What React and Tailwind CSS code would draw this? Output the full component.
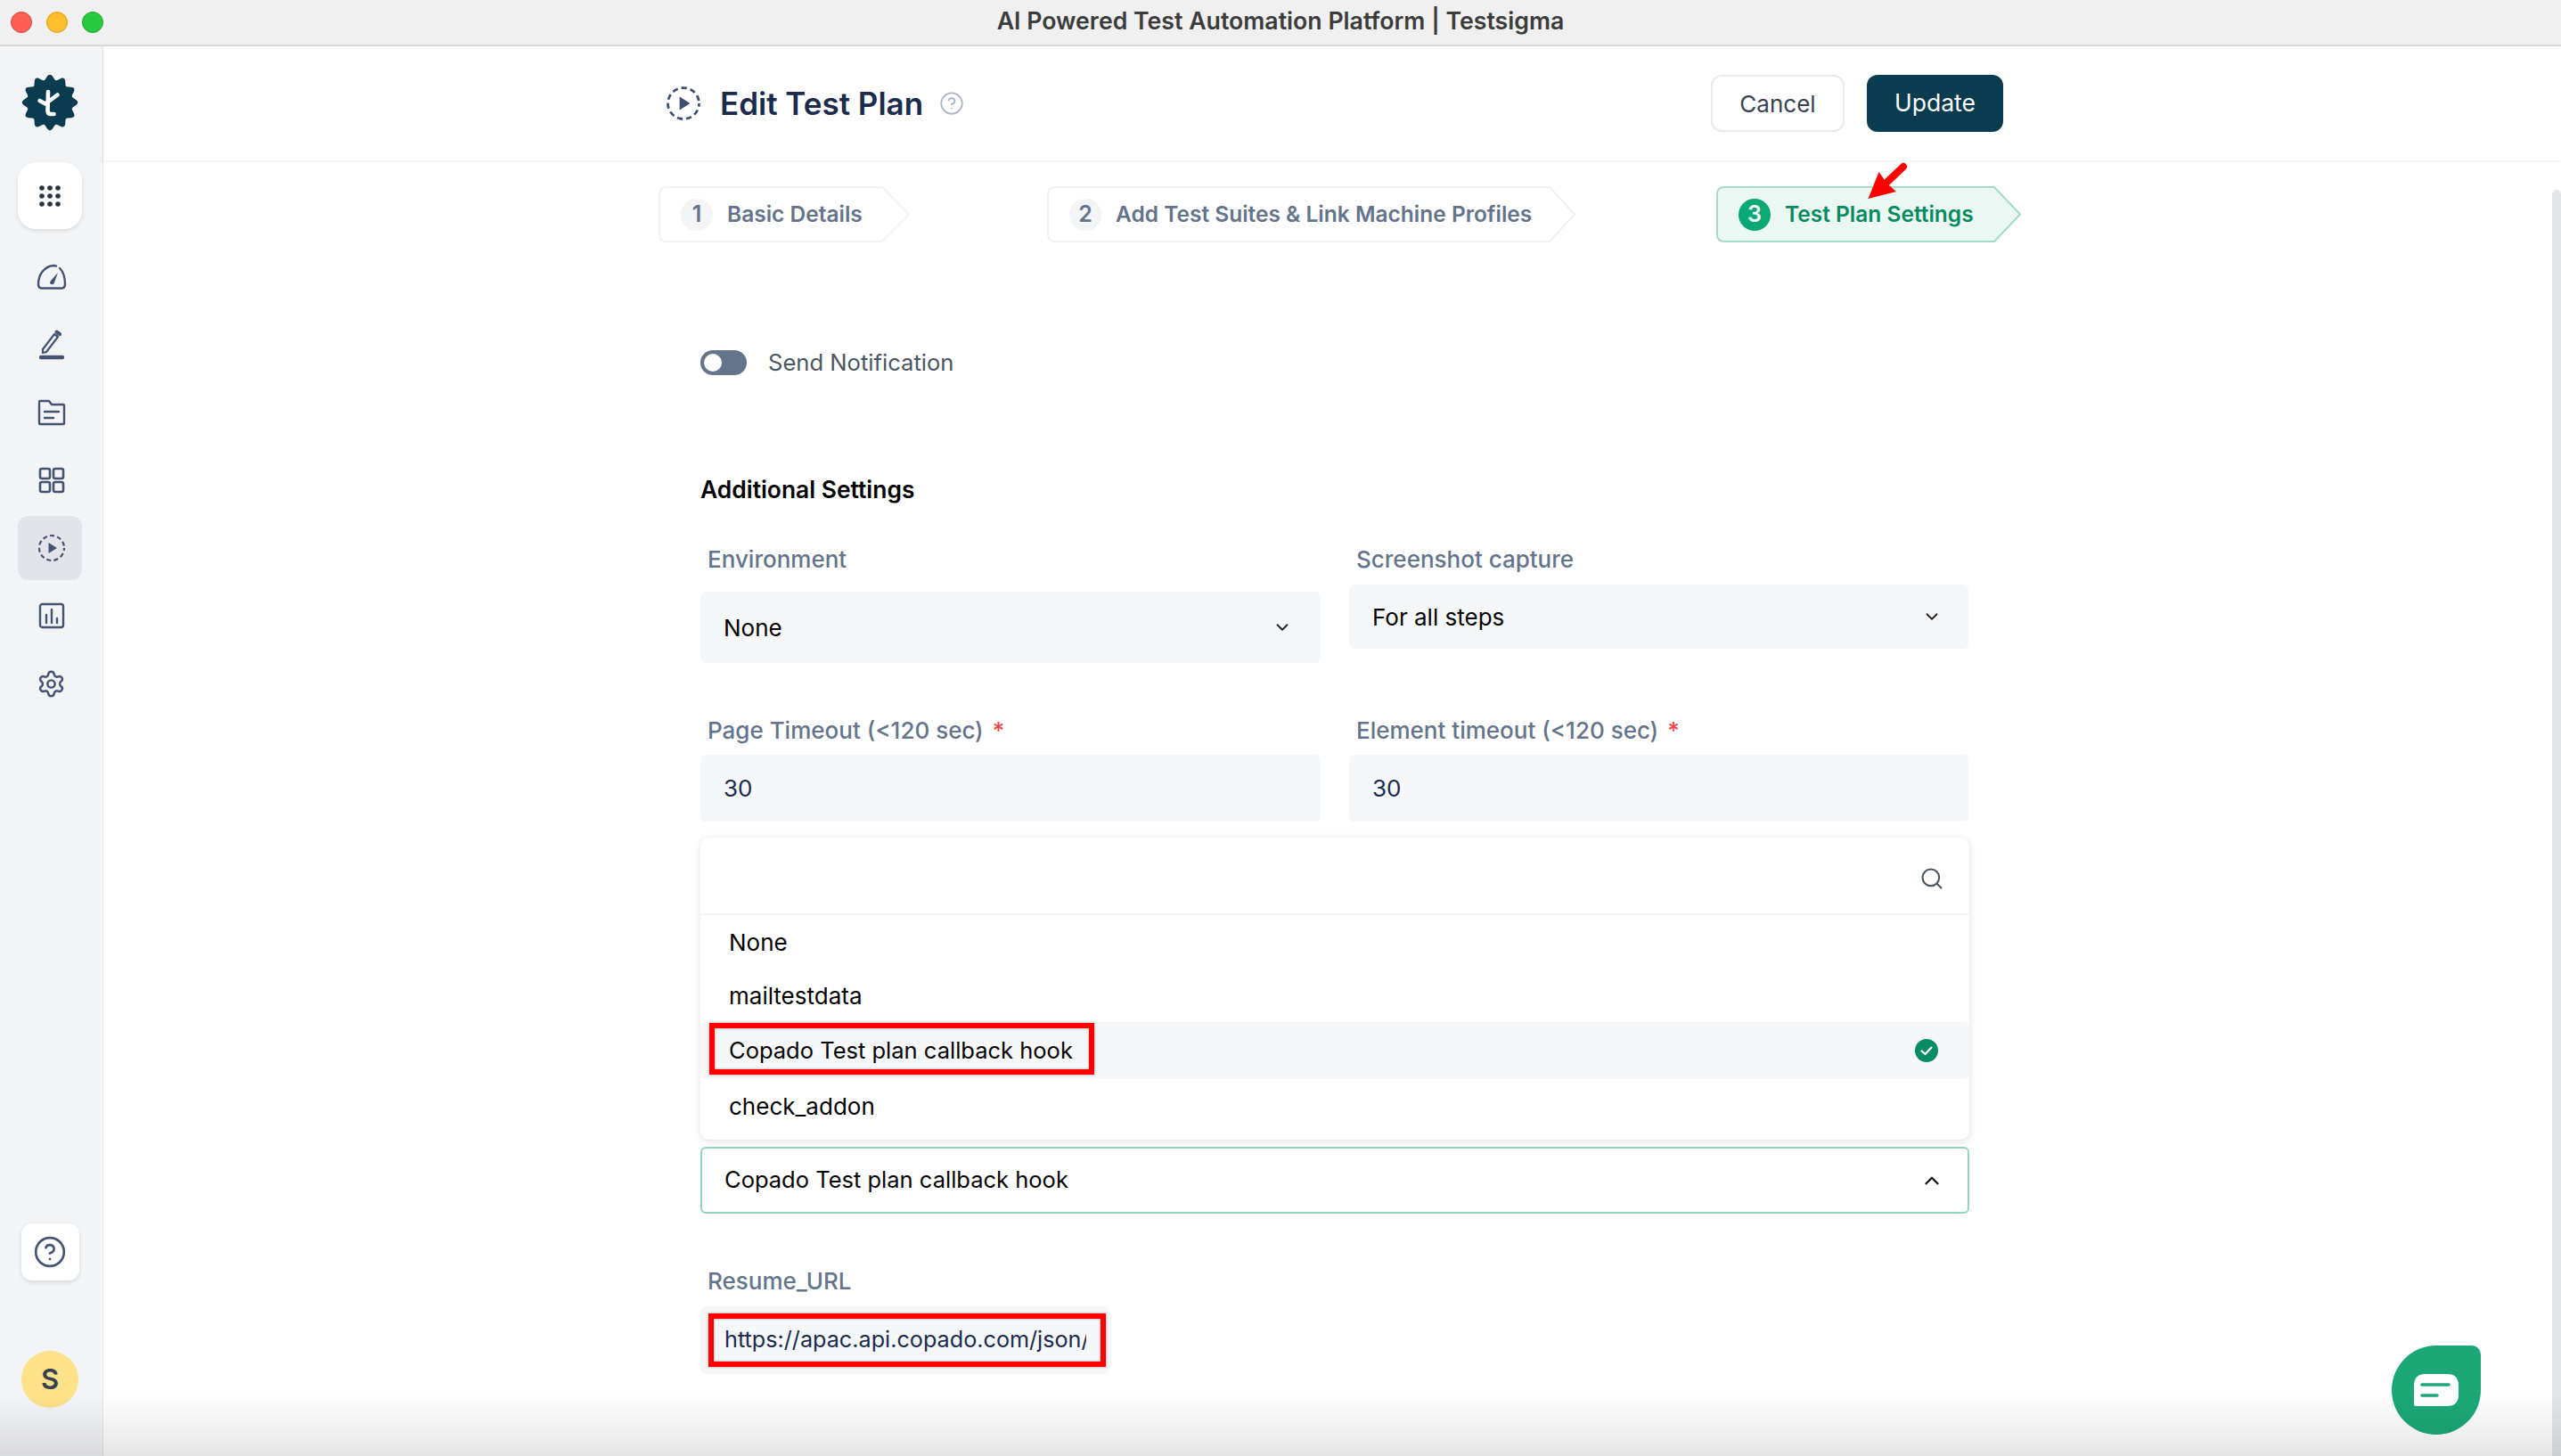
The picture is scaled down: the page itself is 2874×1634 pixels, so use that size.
import React from 'react';
import { ChevronDown, ChevronUp, CircleHelp, Search, Settings } from 'lucide-react';

// 12 lobed badge for the logo
const badgePath = (() => {
  const pts = [];
  for (let i = 0; i < 240; i++) {
    const a = (i / 240) * Math.PI * 2;
    const r = 28.5 + 2.8 * Math.cos(a * 12);
    pts.push(`${(32 + r * Math.sin(a)).toFixed(2)},${(31 - r * Math.cos(a)).toFixed(2)}`);
  }
  return `M${pts.join('L')}Z`;
})();

const Logo = () => (
  <svg viewBox="0 0 64 64" className="w-[64px] h-[64px]">
    <path d={badgePath} fill="#0a3b4f" />
    <path d="M30 19 L29.5 40 Q29.5 44 33 44 L36.5 44" fill="none" stroke="#fff" strokeWidth="4.6" strokeLinecap="round" />
    <path d="M20.5 29 L27 32.5 L40.5 22.5" fill="none" stroke="#fff" strokeWidth="4.6" strokeLinecap="round" strokeLinejoin="round" />
  </svg>
);

const DashedPlay = ({ size = 32, color = '#445373' }) => (
  <svg width={size} height={size} viewBox="0 0 32 32">
    <circle cx="16" cy="16" r="14" fill="none" stroke={color} strokeWidth="2.2" strokeDasharray="5 3.2" strokeDashoffset="2" />
    <path d="M12.5 10 L22 16 L12.5 22 Z" fill={color} />
  </svg>
);

const GaugeIcon = () => (
  <svg width="34" height="30" viewBox="0 0 34 30" fill="none" stroke="#445373" strokeWidth="2.4">
    <path d="M5 27.5 Q2 27 2 23 C2 11 10 2 20 2 L22 2.6 M26 5 C30 9 32 15 32 23 Q32 27 29 27.5 L5 27.5" strokeLinecap="round" />
    <path d="M24 10 L16 19 Q14 22 16.5 23 Q19 24 20 21 Z" fill="#445373" stroke="none" />
  </svg>
);

const PenIcon = () => (
  <svg width="30" height="34" viewBox="0 0 30 34" fill="none" stroke="#445373" strokeWidth="2.2">
    <path d="M5 22 L18 5 L22 8 L9 25 L5 26 Z" strokeLinejoin="round" />
    <path d="M20.5 2.5 L24 5" strokeWidth="4" strokeLinecap="round" />
    <path d="M3 31 L27 31" strokeWidth="4.4" strokeLinecap="round" />
  </svg>
);

const FolderIcon = () => (
  <svg width="32" height="30" viewBox="0 0 32 30" fill="none" stroke="#445373" strokeWidth="2.4">
    <path d="M2 3 Q2 2 3 2 L13 2 L16 6 L29 6 Q30 6 30 7 L30 27 Q30 28 29 28 L3 28 Q2 28 2 27 Z" strokeLinejoin="round" />
    <path d="M8 14 L24 14 M8 21 L18 21" strokeLinecap="round" />
  </svg>
);

const GridIcon = () => (
  <svg width="30" height="30" viewBox="0 0 30 30" fill="none" stroke="#445373" strokeWidth="2.6">
    <rect x="2" y="2" width="11" height="11" rx="2" />
    <rect x="17" y="2" width="11" height="11" rx="2" />
    <rect x="2" y="17" width="11" height="11" rx="2" />
    <rect x="17" y="17" width="11" height="11" rx="2" />
  </svg>
);

const ReportIcon = () => (
  <svg width="30" height="30" viewBox="0 0 30 30" fill="none" stroke="#445373" strokeWidth="2.4">
    <rect x="2" y="2" width="26" height="26" rx="2.5" />
    <path d="M9 14 L9 23 M15 8 L15 23 M21 18 L21 23" strokeLinecap="round" />
  </svg>
);

const Dots = () => (
  <svg width="24" height="24" viewBox="0 0 24 24" fill="#2b3240">
    {[3, 12, 21].map((y) => [3, 12, 21].map((x) => <circle key={`${x}-${y}`} cx={x} cy={y} r="2.8" />))}
  </svg>
);

const SideIcon = ({ active, children }) => (
  <div className={`w-[72px] h-[72px] flex items-center justify-center rounded-[12px] ${active ? 'bg-[#e2e4e9]' : ''}`}>
    <div className="ml-[4px] flex items-center justify-center">{children}</div>
  </div>
);

const Sidebar = () => (
  <aside className="w-[116px] shrink-0 bg-[#f3f4f6] border-r border-[#e5e7eb] flex flex-col items-center">
    <div className="mt-[32px] ml-[-4px]">
      <Logo />
    </div>
    <div className="mt-[34px] w-[72px] h-[75px] ml-[-4px] bg-white rounded-[20px] shadow-[0_2px_5px_rgba(0,0,0,0.1)] flex items-center justify-center">
      <Dots />
    </div>
    <div className="mt-[18px] ml-[-4px] flex flex-col gap-[4px]">
      <SideIcon><GaugeIcon /></SideIcon>
      <SideIcon><PenIcon /></SideIcon>
      <SideIcon><FolderIcon /></SideIcon>
      <SideIcon><GridIcon /></SideIcon>
      <SideIcon active><DashedPlay /></SideIcon>
      <SideIcon><ReportIcon /></SideIcon>
      <SideIcon><Settings size={33} color="#445373" strokeWidth={1.8} /></SideIcon>
    </div>
    <div className="mt-auto mb-[54px] ml-[-3px] flex flex-col items-center gap-[79px]">
      <div className="w-[65px] h-[64px] bg-white rounded-[12px] shadow-[0_2px_5px_rgba(0,0,0,0.12)] flex items-center justify-center">
        <CircleHelp size={38} color="#445373" strokeWidth={1.7} />
      </div>
      <div className="w-[64px] h-[64px] rounded-full bg-[#fde289] text-[#374151] text-[31px] font-semibold flex items-center justify-center">
        S
      </div>
    </div>
  </aside>
);

const Step = ({ n, label, width, active, tip, className = '', children }) => {
  const h = 63;
  const body = width - tip;
  const d = `M9 1 L${body} 1 L${width - 1} ${h / 2} L${body} ${h - 1} L9 ${h - 1} Q1 ${h - 1} 1 ${h - 9} L1 9 Q1 1 9 1 Z`;
  return (
    <div className={`relative h-[63px] flex items-center ${className}`} style={{ width }}>
      <svg width={width} height={h} className="absolute inset-0">
        <path d={d} fill={active ? '#ebf7f3' : '#fff'} stroke={active ? '#a2dcc6' : '#f1f2f4'} strokeWidth="2" />
      </svg>
      <div className="relative ml-[25px] flex items-center gap-[16px]">
        <span className={`w-[36px] h-[36px] rounded-full flex items-center justify-center text-[25px] font-semibold ${active ? 'bg-[#0aa874] text-white' : 'bg-[#f3f4f6] text-[#64748b]'}`}>
          {n}
        </span>
        <span className={`text-[24.5px] font-semibold ${active ? 'text-[#068a62]' : 'text-[#64748b]'}`}>{label}</span>
      </div>
      {children}
    </div>
  );
};

const RedArrow = () => (
  <svg width="54" height="50" viewBox="0 0 54 50" className="absolute left-[164px] top-[-29px]">
    <path d="M27 25 L46 7" stroke="#fe0000" strokeWidth="8" strokeLinecap="round" />
    <path d="M6.5 43 L18.5 13 L25 22 L30 28 L38 35 Z" fill="#fe0000" strokeLinejoin="round" />
  </svg>
);

const Label = ({ children, required, className = '' }) => (
  <div className={`h-[36px] pl-[8px] flex items-center text-[26px] font-medium text-[#64748b] ${className}`}>
    {children}
    {required && <span className="ml-[10px] text-[#ef4444]">*</span>}
  </div>
);

const Field = ({ className = '', children }) => (
  <div className={`bg-[#f6f7f9] rounded-[6px] flex items-center ${className}`}>{children}</div>
);

const RedBox = ({ className }) => (
  <div className={`absolute border-[6px] border-[#fe0000] shadow-[0_0_3px_rgba(0,0,0,0.35),inset_0_0_3px_rgba(0,0,0,0.35)] ${className}`} />
);

const Row = ({ className = '', children }) => (
  <div className={`flex items-center pl-[32px] text-black ${className}`}>{children}</div>
);

const ChatBubble = () => (
  <div className="absolute right-[90px] bottom-[24px] w-[100px] h-[100px] bg-[#1ba876] rounded-[50px] rounded-tr-[10px] flex items-center justify-center">
    <svg width="50" height="36" viewBox="0 0 50 36">
      <path d="M0 13 Q0 0 13 0 L37 0 Q50 0 50 13 L50 23 Q50 36 37 36 L2 36 Q0 36 0 34 Z" fill="#fff" />
      <path d="M9 12 L39 12 M9 24 L26 24" stroke="#1ba876" strokeWidth="3.6" strokeLinecap="round" />
    </svg>
  </div>
);

const App = () => (
  <div className="relative w-[2874px] h-[1634px] overflow-hidden bg-white flex flex-col font-['Inter',sans-serif]">
    {/* window title bar */}
    <div className="relative h-[52px] shrink-0 bg-[#f0f0f0] border-b-2 border-[#d8d8d8] flex items-center justify-center">
      <div className="absolute left-[12px] flex gap-[16px]">
        <span className="w-[24px] h-[24px] rounded-full bg-[#ff5f57] border border-[#e2463f]" />
        <span className="w-[24px] h-[24px] rounded-full bg-[#febc2e] border border-[#e1a116]" />
        <span className="w-[24px] h-[24px] rounded-full bg-[#28c840] border border-[#1aab29]" />
      </div>
      <span className="pb-[3px] text-[26.7px] font-semibold text-[#3c3c3c]">AI Powered Test Automation Platform | Testsigma</span>
    </div>

    <div className="flex-1 flex min-h-0">
      <Sidebar />

      <main className="relative flex-1 min-w-0">
        <header className="h-[128px] pl-[631px] pr-[626px] flex items-center shadow-[0_1px_4px_rgba(0,0,0,0.08)]">
          <DashedPlay size={40} color="#3d4f6e" />
          <h1 className="ml-[21px] text-[35px] font-semibold text-[#1a2b4d]">Edit Test Plan</h1>
          <CircleHelp size={28} color="#a9b4c6" strokeWidth={1.6} className="ml-[18px]" />
          <button className="ml-auto w-[150px] h-[64px] rounded-[12px] border-2 border-[#e9eaef] bg-white text-[26px] text-[#374151]">
            Cancel
          </button>
          <button className="ml-[25px] w-[153px] h-[64px] rounded-[12px] bg-[#0a3b4f] text-[26.5px] text-white">
            Update
          </button>
        </header>

        <div className="mt-[29px] ml-[623px] flex">
          <Step n="1" label="Basic Details" width={282} tip={31} />
          <Step n="2" label="Add Test Suites & Link Machine Profiles" width={593} tip={29} className="ml-[154px]" />
          <Step n="3" label="Test Plan Settings" width={342} tip={30} active className="ml-[158px]">
            <RedArrow />
          </Step>
        </div>

        <div className="ml-[670px] w-[1424px]">
          <div className="mt-[121px] h-[28px] flex items-center gap-[24px]">
            <span className="relative w-[52px] h-[28px] rounded-full bg-[#64748b]">
              <span className="absolute left-[4px] top-[4px] w-[20px] h-[20px] rounded-full bg-white" />
            </span>
            <span className="text-[25.6px] text-[#4b5563]">Send Notification</span>
          </div>

          <h2 className="mt-[111px] h-[36px] flex items-center text-[26.4px] font-semibold text-black">Additional Settings</h2>

          <div className="mt-[41px] grid grid-cols-[696px_695px] gap-x-[32px] items-start">
            <div>
              <Label>Environment</Label>
              <Field className="mt-[19px] h-[80px] pl-[26px] pr-[32px] justify-between text-[26px] text-black">
                None
                <ChevronDown size={22} color="#222" strokeWidth={2} />
              </Field>
            </div>
            <div>
              <Label>Screenshot capture</Label>
              <Field className="mt-[11px] h-[72px] pl-[26px] pr-[30px] justify-between text-[26px] text-black">
                For all steps
                <ChevronDown size={22} color="#222" strokeWidth={2} />
              </Field>
            </div>
          </div>

          <div className="mt-[57px] grid grid-cols-[696px_695px] gap-x-[32px]">
            <div>
              <Label required>Page Timeout (&lt;120 sec)</Label>
              <Field className="mt-[10px] h-[75px] pl-[26px] text-[26px] text-[#1a2b4d]">30</Field>
            </div>
            <div>
              <Label required>Element timeout (&lt;120 sec)</Label>
              <Field className="mt-[10px] h-[75px] pl-[26px] text-[26px] text-[#1a2b4d]">30</Field>
            </div>
          </div>

          <div className="relative mt-[18px] bg-white rounded-[10px] shadow-[0_2px_10px_rgba(0,0,0,0.12)] pb-[6px]">
            <div className="h-[87px] border-b-2 border-[#f3f4f6] pr-[28px] pt-[6px] flex items-center justify-end">
              <Search size={28} color="#4b5563" strokeWidth={1.8} />
            </div>
            <Row className="h-[62px] pb-[2px] text-[26px]">None</Row>
            <Row className="h-[58px] pb-[2px] text-[26px]">mailtestdata</Row>
            <Row className="relative h-[64px] bg-[#f6f7f9] rounded-[6px] justify-between pr-[35px] text-[25.5px]">
              Copado Test plan callback hook
              <svg width="26" height="26" viewBox="0 0 26 26">
                <circle cx="13" cy="13" r="13" fill="#058c62" />
                <path d="M7.5 13.5 L11.5 17 L18.5 9.5" fill="none" stroke="#fff" strokeWidth="2.2" strokeLinecap="round" strokeLinejoin="round" />
              </svg>
              <RedBox className="left-[10px] top-[1px] w-[432px] h-[58px]" />
            </Row>
            <Row className="h-[62px] pb-[2px] text-[26px]">check_addon</Row>
          </div>

          <div className="mt-[8px] h-[75px] border-2 border-[#90d5bc] rounded-[6px] pl-[25px] pr-[27px] flex items-center justify-between text-[25.5px] text-black">
            Copado Test plan callback hook
            <ChevronUp size={26} color="#111" strokeWidth={2.2} />
          </div>

          <Label className="mt-[57px]">Resume_URL</Label>
          <Field className="relative mt-[11px] h-[76px] w-[459px] pl-[27px] pr-[26px] text-[25.2px] text-[#1a2b4d]">
            <span className="overflow-hidden whitespace-nowrap">https://apac.api.copado.com/json/v1/webhook/</span>
            <RedBox className="left-[9px] top-[8px] w-[446px] h-[60px]" />
          </Field>
        </div>

        <div className="absolute right-0 top-[161px] bottom-0 w-[10px] rounded-t-full bg-[#e3e5e9]" />
        <ChatBubble />
      </main>
    </div>

    {/* soft shadow along the bottom of the window */}
    <div className="absolute left-0 right-0 bottom-0 h-[70px] bg-gradient-to-b from-transparent to-[rgba(0,0,0,0.1)] pointer-events-none" />
  </div>
);

export default App;
